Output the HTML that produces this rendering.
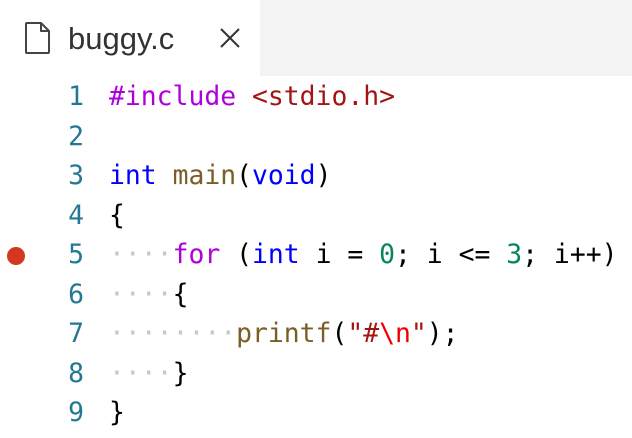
<!DOCTYPE html>
<html><head><style>
body{margin:0;width:632px;height:438px;background:#fff;overflow:hidden;position:relative}
.bar{position:absolute;left:260px;top:0;width:372px;height:76px;background:#f3f3f3}
.tab{position:absolute;left:68px;top:19px;font:31px/40px "Liberation Sans",sans-serif;color:#333}
.ln{position:absolute;font:26.4px/40px "DejaVu Sans Mono",monospace;white-space:pre;color:#000;left:0;width:632px}
.n{position:absolute;right:548px;color:#237893;text-align:right}
.c{position:absolute;left:109px}
.k{color:#af00db}.s{color:#a31515}.e{color:#ee0000}.b{color:#0000ff}.f{color:#795e26}.d{color:#098658}
.w{color:#c8c8c8}
</style></head><body>
<div class="bar"></div>
<svg style="position:absolute;left:24px;top:21px" width="28" height="34" viewBox="0 0 28 34"><path d="M3 2h14l8 8v21a1 1 0 0 1-1 1H3a1 1 0 0 1-1-1V3a1 1 0 0 1 1-1z M17 2v8h8" fill="none" stroke="#444" stroke-width="2" stroke-linejoin="round"/></svg>
<div class="tab">buggy.c</div>
<svg style="position:absolute;left:219px;top:27px" width="22" height="22" viewBox="0 0 22 22"><path d="M2 2L20 20M20 2L2 20" stroke="#333" stroke-width="2"/></svg>
<div style="position:absolute;left:7px;top:247px;width:18px;height:18px;border-radius:50%;background:#d5361f"></div>
<div class="ln" style="top:77px"><span class="n">1</span><span class="c"><span class="k">#include</span> <span class="s">&lt;stdio.h&gt;</span></span></div>
<div class="ln" style="top:116.5px"><span class="n">2</span></div>
<div class="ln" style="top:156px"><span class="n">3</span><span class="c"><span class="b">int</span> <span class="f">main</span>(<span class="b">void</span>)</span></div>
<div class="ln" style="top:195.5px"><span class="n">4</span><span class="c">{</span></div>
<div class="ln" style="top:235px"><span class="n">5</span><span class="c"><span class="w">····</span><span class="k">for</span> (<span class="b">int</span> i = <span class="d">0</span>; i &lt;= <span class="d">3</span>; i++)</span></div>
<div class="ln" style="top:274.5px"><span class="n">6</span><span class="c"><span class="w">····</span>{</span></div>
<div class="ln" style="top:314px"><span class="n">7</span><span class="c"><span class="w">········</span><span class="f">printf</span>(<span class="s">"#</span><span class="e">\n</span><span class="s">"</span>);</span></div>
<div class="ln" style="top:353.5px"><span class="n">8</span><span class="c"><span class="w">····</span>}</span></div>
<div class="ln" style="top:393px"><span class="n">9</span><span class="c">}</span></div>
</body></html>
